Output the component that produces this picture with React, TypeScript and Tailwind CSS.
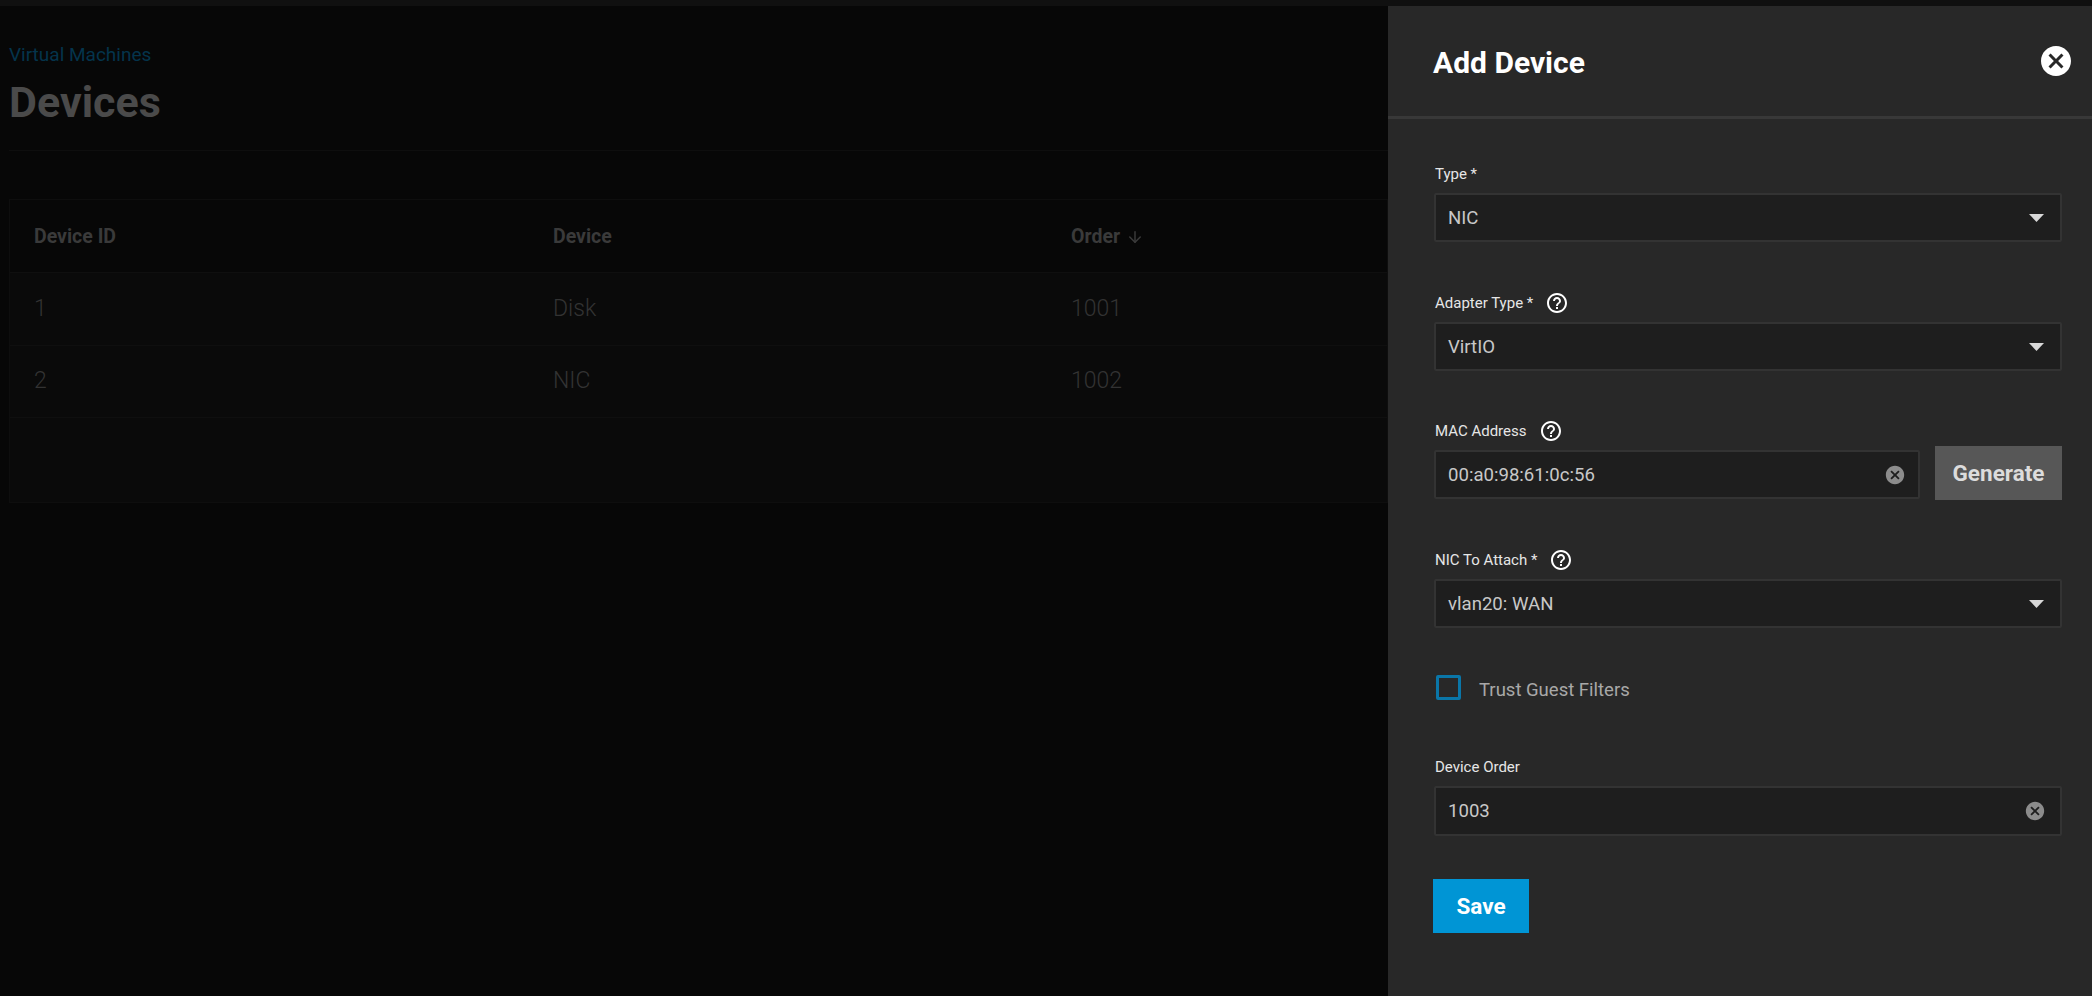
import { ArrowDown } from "lucide-react";
import { MdCancel, MdHelpOutline } from "react-icons/md";

function Label({ text, help }: { text: string; help?: boolean }) {
  return (
    <div className="mb-[9px] flex h-[20px] items-center pl-px text-[15px] text-[#e6e6e6]">
      <span>{text}</span>
      {help && <MdHelpOutline className="ml-[12px] shrink-0 text-white" size={24} />}
    </div>
  );
}

function Box({ value, children, className = "" }: { value: string; children?: React.ReactNode; className?: string }) {
  return (
    <div
      className={`flex h-[49px] items-center justify-between rounded-[2px] border-2 border-[#333333] bg-[#1e1e1e] pl-[12px] text-[18.6px] text-[#c8c8c8] ${className}`}
    >
      <span className="pt-[2px]">{value}</span>
      {children}
    </div>
  );
}

function SelectArrow() {
  return (
    <svg className="mr-[16px]" fill="#d8d8d8" height="8" viewBox="0 0 15 8" width="15">
      <polygon points="0,0 15,0 7.5,8" />
    </svg>
  );
}

export default function App() {
  return (
    <div className="flex h-[996px] w-[2092px] flex-col overflow-hidden bg-[#070707] font-['Roboto',sans-serif] [font-stretch:88%]">
      <div className="h-[6px] shrink-0 bg-[#101010]" />
      <div className="flex min-h-0 flex-1">
        {/* Page behind the backdrop */}
        <main className="flex-1 pl-[9px]">
          <div className="border-b border-[#0e0e0e] pb-[24px]">
            <div className="pt-[39px] text-[19px] leading-[20px] text-[#04344c]">Virtual Machines</div>
            <h1 className="mt-[13px] text-[43px] leading-[48px] font-bold text-[#4a4a4a]">Devices</h1>
          </div>
          <div className="mt-[48px] h-[304px] border border-[#0e0e0e] bg-[#0a0a0a]">
            <div className="flex h-[73px] items-center border-b border-[#0f0f0f] bg-[#070707] pt-[2px] pl-[24px] text-[19.5px] font-bold text-[#3a3a3a]">
              <span className="w-[519px]">Device ID</span>
              <span className="w-[518px]">Device</span>
              <span className="flex items-center gap-[6px]">
                Order <ArrowDown size={18} />
              </span>
            </div>
            <div className="flex h-[73px] items-center border-b border-[#0f0f0f] pl-[24px] text-[23px] font-light text-[#333333]">
              <span className="w-[519px]">1</span>
              <span className="w-[518px]">Disk</span>
              <span>1001</span>
            </div>
            <div className="flex h-[72px] items-center border-b border-[#0f0f0f] pl-[24px] text-[23px] font-light text-[#333333]">
              <span className="w-[519px]">2</span>
              <span className="w-[518px]">NIC</span>
              <span>1002</span>
            </div>
          </div>
        </main>

        {/* Slide-in form */}
        <aside className="flex w-[704px] shrink-0 flex-col bg-[#282828]">
          <header className="flex h-[113px] shrink-0 items-center justify-between border-b-[3px] border-[#383838] pr-[18px] pl-[45px]">
            <h2 className="mt-[3px] text-[30px] font-bold text-white">Add Device</h2>
            <MdCancel className="text-white" size={36} />
          </header>
          <form className="pt-[45px] pr-[30px] pl-[46px]">
            <Label text="Type *" />
            <Box value="NIC">
              <SelectArrow />
            </Box>

            <div className="mt-[51px]">
              <Label help text="Adapter Type *" />
              <Box value="VirtIO">
                <SelectArrow />
              </Box>
            </div>

            <div className="mt-[50px] flex items-end gap-[15px]">
              <div className="flex-1">
                <Label help text="MAC Address" />
                <Box value="00:a0:98:61:0c:56">
                  <MdCancel className="mr-[12px] text-[#8c8c8c]" size={22} />
                </Box>
              </div>
              <button
                className="-mb-px h-[54px] w-[127px] bg-[#575757] pt-[2px] text-[22.5px] font-bold text-[#dcdcdc]"
                type="button"
              >
                Generate
              </button>
            </div>

            <div className="mt-[51px]">
              <Label help text="NIC To Attach *" />
              <Box value="vlan20: WAN">
                <SelectArrow />
              </Box>
            </div>

            <label className="mt-[47px] flex h-[25px] items-center gap-[18px] pl-[2px] text-[18.5px] text-[#a8a8a8]">
              <span className="size-[25px] shrink-0 rounded-[2px] border-[3px] border-[#0a76a8]" />
              <span className="pt-[6px]">Trust Guest Filters</span>
            </label>

            <div className="mt-[57px]">
              <Label text="Device Order" />
              <Box className="h-[50px]" value="1003">
                <MdCancel className="mr-[14px] text-[#8c8c8c]" size={22} />
              </Box>
            </div>

            <button
              className="mt-[43px] -ml-px h-[54px] w-[96px] bg-[#0095d5] pt-px text-[22.5px] font-bold text-white"
              type="button"
            >
              Save
            </button>
          </form>
        </aside>
      </div>
    </div>
  );
}
